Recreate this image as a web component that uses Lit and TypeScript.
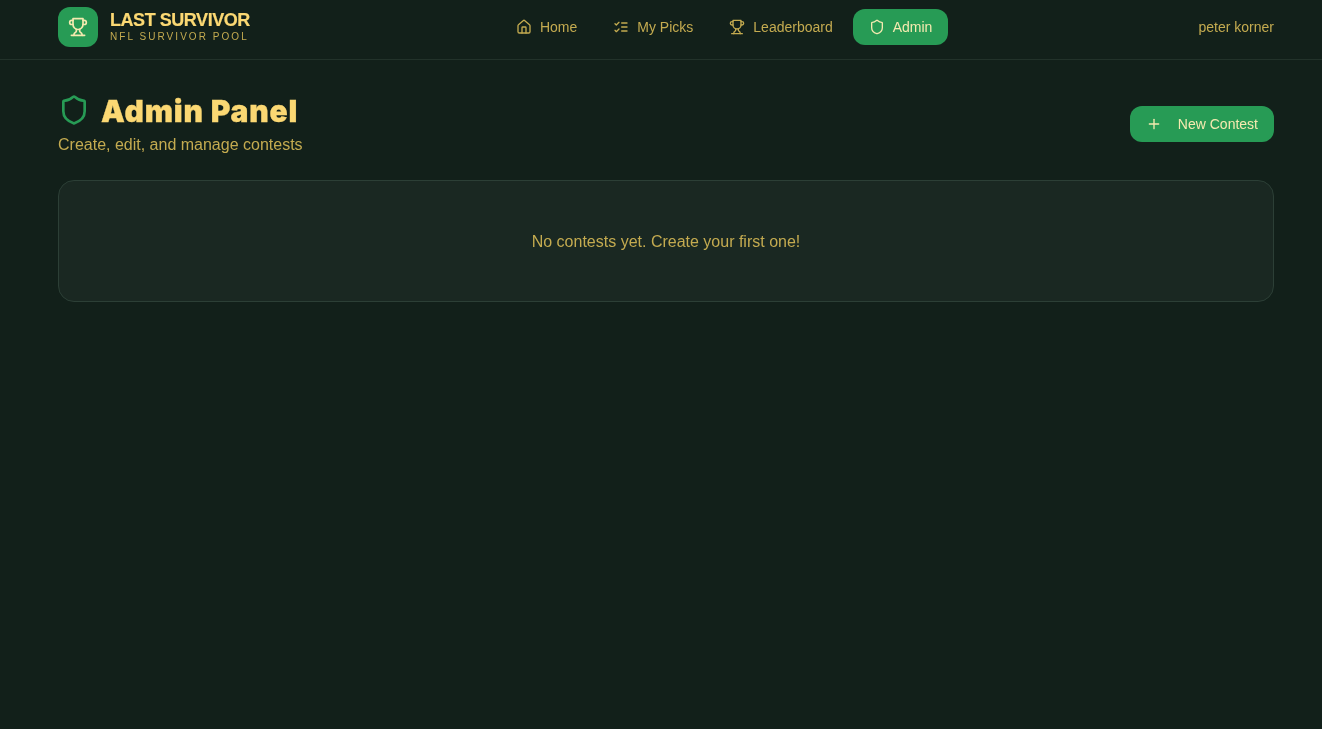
import { LitElement, css, html, svg } from "lit";
import { customElement } from "lit/decorators.js";

const trophy = svg`<path d="M6 9H4.5a2.5 2.5 0 0 1 0-5H6"/><path d="M18 9h1.5a2.5 2.5 0 0 0 0-5H18"/><path d="M4 22h16"/><path d="M10 14.66V17c0 .55-.47.98-.97 1.21C7.85 18.75 7 20.24 7 22"/><path d="M14 14.66V17c0 .55.47.98.97 1.21C16.15 18.75 17 20.24 17 22"/><path d="M18 2H6v7a6 6 0 0 0 12 0V2Z"/>`;
const house = svg`<path d="M15 21v-8a1 1 0 0 0-1-1h-4a1 1 0 0 0-1 1v8"/><path d="M3 10a2 2 0 0 1 .709-1.528l7-5.999a2 2 0 0 1 2.582 0l7 5.999A2 2 0 0 1 21 10v9a2 2 0 0 1-2 2H5a2 2 0 0 1-2-2z"/>`;
const listChecks = svg`<path d="m3 17 2 2 4-4"/><path d="m3 7 2 2 4-4"/><path d="M13 6h8"/><path d="M13 12h8"/><path d="M13 18h8"/>`;
const shield = svg`<path d="M20 13c0 5-3.5 7.5-7.66 8.95a1 1 0 0 1-.67-.01C7.5 20.5 4 18 4 13V6a1 1 0 0 1 1-1c2 0 4.5-1.2 6.24-2.72a1.17 1.17 0 0 1 1.52 0C14.51 3.81 17 5 19 5a1 1 0 0 1 1 1z"/>`;
const plus = svg`<path d="M5 12h14"/><path d="M12 5v14"/>`;

function icon(body: unknown, size: number) {
  return html`<svg width=${size} height=${size} viewBox="0 0 24 24" fill="none" stroke="currentColor" stroke-width="2" stroke-linecap="round" stroke-linejoin="round">${body}</svg>`;
}

const navItems = [
  { label: "Home", icon: house },
  { label: "My Picks", icon: listChecks },
  { label: "Leaderboard", icon: trophy },
  { label: "Admin", icon: shield, active: true },
];

@customElement("app-root")
export class AppRoot extends LitElement {
  static styles = css`
    :host {
      display: block;
      min-height: 729px;
      background: #12201a;
      color: #c4ab50;
      font-family: "Liberation Sans", Arial, sans-serif;
      font-size: 14px;
    }
    svg {
      display: block;
      flex: none;
    }
    header {
      display: flex;
      align-items: center;
      justify-content: space-between;
      padding: 7px 48px 12px 58px;
      border-bottom: 1px solid #22322a;
      will-change: transform;
    }
    .brand {
      display: flex;
      align-items: center;
      gap: 12px;
    }
    .logo {
      display: flex;
      align-items: center;
      justify-content: center;
      width: 40px;
      height: 40px;
      border-radius: 12px;
      background: #279b55;
      color: #f5eab0;
    }
    .brand-name {
      font-size: 18px;
      font-weight: 700;
      line-height: 18px;
      color: #fbd873;
      letter-spacing: -0.45px;
      -webkit-text-stroke: 0.2px #fbd873;
    }
    .brand-sub {
      font-size: 10px;
      line-height: 15px;
      letter-spacing: 2.05px;
    }
    nav {
      display: flex;
      gap: 4px;
    }
    nav a {
      display: flex;
      align-items: center;
      gap: 8px;
      height: 36px;
      padding: 0 16px;
      border-radius: 12px;
    }
    nav a.active {
      background: #279b55;
      color: #f5eab0;
    }
    main {
      padding: 32px 48px 0 58px;
      will-change: transform;
    }
    .title-row {
      display: flex;
      align-items: flex-start;
      justify-content: space-between;
      margin-bottom: 22px;
    }
    .title {
      display: flex;
      align-items: center;
      gap: 11px;
    }
    .title svg {
      color: #279b55;
    }
    h1 {
      margin: 2px 0 0;
      font-family: Inter, "Liberation Sans", sans-serif;
      font-size: 30px;
      line-height: 34px;
      font-weight: 900;
      letter-spacing: 0.85px;
      color: #fbd873;
      -webkit-text-stroke: 0.3px #fbd873;
    }
    .subtitle {
      margin-top: 4px;
      font-size: 16px;
      line-height: 26px;
    }
    button {
      display: flex;
      align-items: center;
      gap: 16px;
      height: 36px;
      margin-top: 14px;
      padding: 0 16px;
      border: 0;
      border-radius: 12px;
      background: #279b55;
      color: #f5eab0;
      font: inherit;
    }
    .card {
      display: flex;
      justify-content: center;
      padding: 48px 48px 46px;
      border: 1px solid #2c3f36;
      border-radius: 16px;
      background: #1a2822;
      font-size: 16px;
      line-height: 26px;
    }
  `;

  render() {
    return html`
      <header>
        <div class="brand">
          <div class="logo">${icon(trophy, 20)}</div>
          <div>
            <div class="brand-name">LAST SURVIVOR</div>
            <div class="brand-sub">NFL SURVIVOR POOL</div>
          </div>
        </div>
        <nav>
          ${navItems.map(
            (item) => html`<a class=${item.active ? "active" : ""}>${icon(item.icon, 16)}${item.label}</a>`,
          )}
        </nav>
        <div class="user">peter korner</div>
      </header>
      <main>
        <div class="title-row">
          <div>
            <div class="title">${icon(shield, 32)}<h1>Admin Panel</h1></div>
            <div class="subtitle">Create, edit, and manage contests</div>
          </div>
          <button>${icon(plus, 16)}New Contest</button>
        </div>
        <div class="card">No contests yet. Create your first one!</div>
      </main>
    `;
  }
}
